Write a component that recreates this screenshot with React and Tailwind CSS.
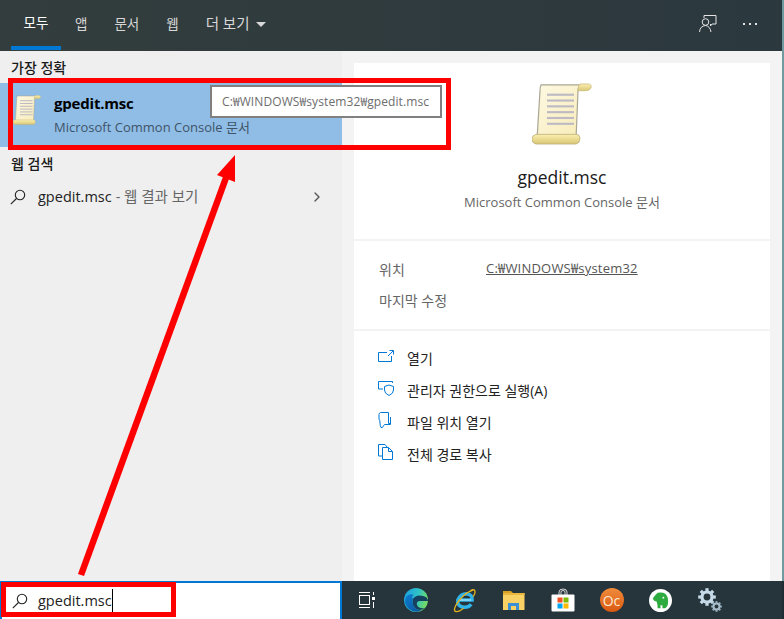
import { ChevronRight } from "lucide-react";

const font = "font-['Open_Sans','Noto_Sans_CJK_KR',sans-serif]";

function Scroll({ className, id }) {
  return (
    <svg viewBox="0 0 60 64" preserveAspectRatio="none" className={className}>
      <defs>
        <linearGradient id={`paper${id}`} x1="0" y1="0" x2="1" y2="1">
          <stop offset="0" stopColor="#fdf8e2" />
          <stop offset="1" stopColor="#f8ecb8" />
        </linearGradient>
        <linearGradient id={`roll${id}`} x1="0" y1="0" x2="0" y2="1">
          <stop offset="0" stopColor="#fcf0b0" />
          <stop offset="1" stopColor="#d9c674" />
        </linearGradient>
      </defs>
      <path d="M9 2 H50 Q46 3 46 8 L44 58 H5 L8 8 Q8 4 9 2 Z" fill={`url(#paper${id})`} stroke="#a9a693" strokeWidth="1.2" />
      <path d="M48 1 H56 Q60 1 59 5 Q58 8 53 8 H46 Q46 3 48 1 Z" fill={`url(#roll${id})`} stroke="#cdbd80" strokeWidth="0.8" />
      <path d="M4 53 H44 Q48 53 48 57 Q48 62 44 63 H4 Q0 62 0 58 Q0 54 4 53 Z" fill={`url(#roll${id})`} stroke="#bcae78" strokeWidth="0.8" />
      {[11, 17, 23, 29, 35, 41].map((y) => (
        <rect key={y} x="15" y={y} width="27" height="2.2" fill="#bdbac4" />
      ))}
    </svg>
  );
}

function SearchIcon({ className }) {
  return (
    <svg viewBox="0 0 16 16" fill="none" stroke="currentColor" strokeWidth="1.1" className={className}>
      <circle cx="10" cy="6" r="4.7" />
      <path d="M6.5 9.5 L0.8 15.2" />
    </svg>
  );
}

function OpenIcon() {
  return (
    <svg viewBox="0 0 16 12" fill="none" stroke="#0078d4" strokeWidth="1" className="w-4 h-3">
      <path d="M9 2.5 H0.5 V11.5 H13.5 V6" />
      <path d="M10 6 L15 1 M11.5 0.5 H15.5 V4.5" />
    </svg>
  );
}

function AdminIcon() {
  return (
    <svg viewBox="0 0 17 15" fill="none" stroke="#0078d4" strokeWidth="1" className="w-[17px] h-[15px]">
      <path d="M0.5 8 V0.5 H14.5 V2" />
      <path d="M0.5 8 H5" />
      <path d="M11 4 L15.5 5.5 V9 Q15.5 12.5 11 14.5 Q6.5 12.5 6.5 9 V5.5 Z" fill="#fff" />
    </svg>
  );
}

function FolderIcon() {
  return (
    <svg viewBox="0 0 13 16" fill="none" stroke="#0078d4" strokeWidth="1" className="w-[13px] h-4">
      <path d="M2.5 0.5 H10.5 V11.5 H12.5" />
      <path d="M2.5 0.5 Q1 1 1 2.5 V7 Q2 8 2 11 Q2 13.5 3 15.5 H4.5 Q5.5 13.5 6.5 12.5 H12.5 V5" />
    </svg>
  );
}

function CopyIcon() {
  return (
    <svg viewBox="0 0 15 16" fill="none" stroke="#0078d4" strokeWidth="1" className="w-[15px] h-4">
      <path d="M4.5 12 H0.5 V0.5 H7 L9 3" />
      <path d="M4.5 3.5 H10.5 L14.5 7.5 V15.5 H4.5 Z" fill="#fff" />
      <path d="M10.5 3.5 V7.5 H14.5" />
    </svg>
  );
}

function TaskView() {
  return (
    <svg viewBox="0 0 18 18" fill="none" stroke="#fff" strokeWidth="1" className="w-[18px] h-[18px]">
      <path d="M1 1.5 H12 M1 16.5 H12" />
      <rect x="1.5" y="4.5" width="10" height="9" />
      <rect x="14" y="6" width="3" height="3" fill="#fff" stroke="none" />
      <path d="M15.5 1 V4 M15.5 11 V17" strokeWidth="1" />
    </svg>
  );
}

function EdgeIcon() {
  return (
    <svg viewBox="0 0 24 24" className="w-6 h-6">
      <defs>
        <linearGradient id="edgeA" x1="0" y1="0" x2="1" y2="0.3">
          <stop offset="0" stopColor="#1b9de2" />
          <stop offset="0.6" stopColor="#2fc2c8" />
          <stop offset="1" stopColor="#6fdb6a" />
        </linearGradient>
        <linearGradient id="edgeB" x1="0" y1="0" x2="1" y2="1">
          <stop offset="0" stopColor="#0c7fd0" />
          <stop offset="1" stopColor="#0b4f9a" />
        </linearGradient>
      </defs>
      <circle cx="12" cy="12" r="12" fill="url(#edgeA)" />
      <path d="M24 13 Q24 9 19 8 Q12 6 9 11 Q7 16 11 20 Q15 24 21 20 Q15 21 13 17 Q12 14 15 13 Z" fill="#16405f" />
      <path d="M9 11 Q7 16 11 20 Q14 23 18 22 Q12 26 5 21 Q-1 15 2 9 Q5 5 10 7 Q7 8 9 11 Z" fill="url(#edgeB)" />
    </svg>
  );
}

function IeIcon() {
  return (
    <svg viewBox="0 0 24 26" fill="none" className="w-[23px] h-[25px]">
      <path d="M5 12.5 H20 Q20.5 6.5 14 6 Q8 6 5 12.5 Q4 19 11 20 Q16 20.5 19 17" stroke="#2fb4ea" strokeWidth="3.6" />
      <path d="M7 12.5 H19" stroke="#d6f3ff" strokeWidth="1" />
      <path d="M21 2 Q10 6 3 18 Q0 24 3 24.5 Q6 25 11 21" stroke="#e2b21e" strokeWidth="1.4" />
      <path d="M18 3 Q23 0 23 4 Q23 6 21 9" stroke="#e2b21e" strokeWidth="1.4" />
    </svg>
  );
}

function ExplorerIcon() {
  return (
    <svg viewBox="0 0 22 20" className="w-[22px] h-5">
      <path d="M0 1 H8 L10 3 H0 Z" fill="#d9a021" />
      <rect x="0" y="3" width="21.5" height="17" fill="#fad165" />
      <rect x="0" y="3" width="21.5" height="2" fill="#e9b73e" />
      <path d="M5 20 V13 H16 V20 H13 V16 H8 V20 Z" fill="#3b8fd4" />
    </svg>
  );
}

function StoreIcon() {
  return (
    <svg viewBox="0 0 24 24" className="w-6 h-6">
      <path d="M8 7 V4 Q8 1 12 1 Q16 1 16 4 V7 M10 7 V4 Q10 2.5 12 2.5 Q14 2.5 14 4 V7" fill="none" stroke="#e8e8e8" strokeWidth="0.9" />
      <rect x="0.5" y="6.5" width="23" height="17" rx="1" fill="#fff" />
      <rect x="6.5" y="9.5" width="5" height="5" fill="#f25022" />
      <rect x="12.5" y="9.5" width="5" height="5" fill="#7fba00" />
      <rect x="6.5" y="15.5" width="5" height="5" fill="#00a4ef" />
      <rect x="12.5" y="15.5" width="5" height="5" fill="#ffb900" />
    </svg>
  );
}

function EvernoteIcon() {
  return (
    <svg viewBox="0 0 24 24" className="w-[23px] h-[23px]">
      <circle cx="12" cy="12" r="12" fill="#fff" />
      <path d="M6 7 L9 4 Q14 3 17 5 Q20 8 20 13 Q20 18 17 20 H14 L14 17 L12 17 L12 20 H9 Q9 16 8 13 Q5 13 4 10 Z" fill="#2dab3f" />
      <circle cx="15" cy="9" r="1" fill="#fff" />
    </svg>
  );
}

function GearsIcon() {
  const teeth = [0, 45, 90, 135];
  return (
    <svg viewBox="0 0 24 24" fill="none" className="w-6 h-6">
      <g transform="translate(9 9)">
        {teeth.map((a) => (
          <rect key={a} x="-1.6" y="-8.8" width="3.2" height="17.6" fill="#c5dae9" transform={`rotate(${a})`} />
        ))}
        <circle r="6.6" fill="#c5dae9" />
        <circle r="3.4" fill="#26343c" />
      </g>
      <g transform="translate(18.5 18.5)">
        {teeth.map((a) => (
          <rect key={a} x="-1" y="-5.4" width="2" height="10.8" fill="#8fa8b8" transform={`rotate(${a})`} />
        ))}
        <circle r="4" fill="#a7bccb" />
        <circle r="1.9" fill="#26343c" />
      </g>
    </svg>
  );
}

function Action({ icon, label }) {
  return (
    <div className="flex items-center h-8">
      <span className="w-[29px] flex -mt-1">{icon}</span>
      <span className="text-[14px] text-[#222]">{label}</span>
    </div>
  );
}

export default function App() {
  return (
    <div className={`relative w-[784px] h-[619px] overflow-hidden flex ${font}`}>
      <div className="w-[782px] shrink-0 flex flex-col bg-[#f3f3f3]">
        {/* Tabs */}
        <header className="flex items-center justify-between h-[51px] shrink-0 pl-[11px] pr-[25px] bg-gradient-to-r from-[#333d3d] to-[#2b383e] text-[13.5px] text-[#d8d8d8]">
          <nav className="flex gap-[3px] h-full">
            <div className="flex items-center justify-center w-[50px] h-[50px] pt-[1px] border-b-4 border-[#0078d4] text-white">모두</div>
            <div className="flex items-center -ml-px px-3 pb-[3px]">앱</div>
            <div className="flex items-center px-3 pb-[3px]">문서</div>
            <div className="flex items-center px-3 pb-[3px]">웹</div>
            <div className="flex items-center px-3 pb-[3px] gap-[7px] text-[14.5px]">
              더 보기
              <span className="w-0 h-0 border-x-[5px] border-x-transparent border-t-[5px] border-t-[#d8d8d8]" />
            </div>
          </nav>
          <div className="flex items-center gap-[26px] pb-[4px]">
            <svg viewBox="0 0 18 18" fill="none" stroke="#e4e4e4" strokeWidth="1" className="w-[18px] h-[18px]">
              <path d="M5 3 V0.5 H17 V9 H13 L11.5 11 V9" />
              <circle cx="6.5" cy="7" r="3.3" />
              <path d="M0.5 17 Q1 11 6.5 10.5 Q11 11 12 17" />
            </svg>
            <span className="flex gap-[4px]">
              <i className="w-[2px] h-[2px] bg-[#e4e4e4]" />
              <i className="w-[2px] h-[2px] bg-[#e4e4e4]" />
              <i className="w-[2px] h-[2px] bg-[#e4e4e4]" />
            </span>
          </div>
        </header>

        <div className="flex flex-1 min-h-0">
          {/* Results */}
          <aside className="w-[342px] shrink-0 bg-[#efefef]">
            <h2 className="h-8 pl-[11px] pt-[1px] flex items-center text-[14px] font-medium text-[#1a1a1a]">가장 정확</h2>
            <div className="flex items-center h-16 bg-[#8fbde6]">
              <Scroll id="a" className="ml-[13px] mb-[10px] w-[28px] h-[30px] shrink-0" />
              <div className="ml-[13px]">
                <div className="text-[15px] font-bold tracking-[-0.2px] leading-[24px] text-black">gpedit.msc</div>
                <div className="text-[13px] leading-[24px] text-[#3f5468]">Microsoft Common Console 문서</div>
              </div>
            </div>
            <h2 className="h-[33px] pl-[11px] flex items-center text-[14px] font-medium text-[#1a1a1a]">웹 검색</h2>
            <div className="flex items-center h-[33px] pl-[10px] pr-[17px]">
              <SearchIcon className="w-4 h-4 text-[#222] shrink-0" />
              <span className="ml-3 text-[14.5px] text-[#222]">gpedit.msc</span>
              <span className="ml-1 text-[14.5px] text-[#666]">- 웹 결과 보기</span>
              <ChevronRight className="ml-auto w-4 h-4 text-[#555]" strokeWidth={2} />
            </div>
          </aside>

          {/* Preview */}
          <main className="flex-1 mt-3 ml-3 mr-3 bg-white flex flex-col">
            <div className="h-[178px] flex flex-col items-center border-b-2 border-[#f3f3f3]">
              <Scroll id="b" className="mt-[20px] mr-[1px] w-[60px] h-[62px]" />
              <div className="mt-[20px] text-[17.5px] leading-[24px] text-[#1a1a1a]">gpedit.msc</div>
              <div className="mt-[1px] text-[13px] leading-[24px] text-[#666]">Microsoft Common Console 문서</div>
            </div>
            <div className="h-[90px] pl-[25px] pt-[12px] border-b-2 border-[#f3f3f3] text-[14px] text-[#666]">
              <div className="flex h-8 items-center">
                <span className="w-[107px]">위치</span>
                <span className="underline text-[13px] tracking-[0.2px] text-[#555]">C:₩WINDOWS₩system32</span>
              </div>
              <div className="h-[31px] flex items-center">마지막 수정</div>
            </div>
            <div className="pl-[24px] pt-[11px]">
              <Action icon={<OpenIcon />} label="열기" />
              <Action icon={<AdminIcon />} label="관리자 권한으로 실행(A)" />
              <Action icon={<FolderIcon />} label="파일 위치 열기" />
              <Action icon={<CopyIcon />} label="전체 경로 복사" />
            </div>
          </main>
        </div>

        {/* Taskbar */}
        <footer className="flex h-[38px] shrink-0 bg-[#26343c]">
          <div className="w-[342px] shrink-0 flex items-center pl-[10px] bg-white border-t-2 border-x-2 border-x-[#0078d4] border-t-[#0078d4]">
            <SearchIcon className="w-4 h-4 text-[#222]" />
            <span className="ml-[10px] text-[14.5px] text-[#222]">gpedit.msc</span>
            <span className="w-px h-[24px] bg-black" />
          </div>
          <div className="flex items-center">
            <span className="w-[49px] flex justify-center"><TaskView /></span>
            <span className="w-[49px] flex justify-center"><EdgeIcon /></span>
            <span className="w-[49px] flex justify-center"><IeIcon /></span>
            <span className="w-[49px] flex justify-center"><ExplorerIcon /></span>
            <span className="w-[49px] flex justify-center"><StoreIcon /></span>
            <span className="w-[49px] flex justify-center">
              <span className="w-6 h-6 rounded-full bg-gradient-to-b from-[#f08b3a] to-[#d9580f] flex items-center justify-center text-[14px] text-[#ffe9d2]">Oc</span>
            </span>
            <span className="w-[49px] flex justify-center"><EvernoteIcon /></span>
            <span className="w-[49px] flex justify-center"><GearsIcon /></span>
          </div>
        </footer>
      </div>

      {/* Window edge behind the start menu */}
      <div className="flex-1 flex flex-col">
        <div className="flex-1 bg-[#6f9aa0]" />
        <div className="h-[38px] bg-[#1f2c33]" />
      </div>

      {/* Annotation overlays */}
      <div className="absolute left-[210px] top-[85px] w-[232px] h-[33px] bg-white border-2 border-[#808080] flex items-center pl-[10px] text-[12px] tracking-[0.1px] text-[#6d6d6d]">
        C:₩WINDOWS₩system32₩gpedit.msc
      </div>
      <div className="absolute left-[8px] top-[78px] w-[443px] h-[72px] border-[5px] border-[#ff0000]" />
      <div className="absolute left-[1px] top-[582px] w-[175px] h-[35px] border-[5px] border-[#ff0000]" />
      <svg viewBox="0 0 784 619" className="absolute inset-0 w-[784px] h-[619px] pointer-events-none">
        <path d="M81 575 L227 175" stroke="#ff0000" strokeWidth="6.5" fill="none" />
        <path d="M235 155 L217 175 L235 182 Z" fill="#ff0000" />
      </svg>
    </div>
  );
}
